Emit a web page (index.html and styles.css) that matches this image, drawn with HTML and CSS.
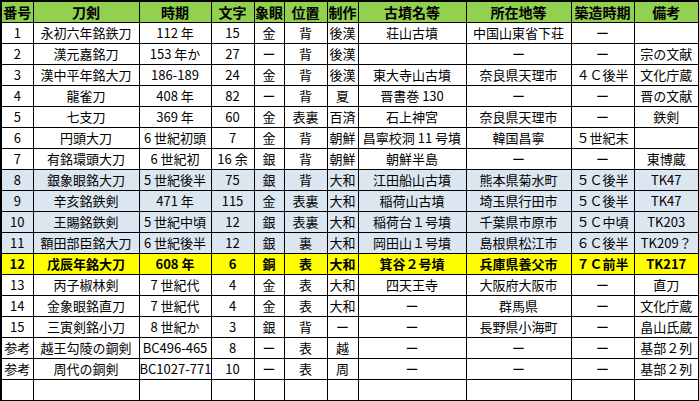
FILE: index.html
```html
<!DOCTYPE html>
<html lang="ja">
<head>
<meta charset="utf-8">
<link rel="stylesheet" href="styles.css">
</head>
<body>
<table class="sheet">
<colgroup>
<col class="c1"><col class="c2"><col class="c3"><col class="c4"><col class="c5"><col class="c6"><col class="c7"><col class="c8"><col class="c9"><col class="c10"><col class="c11">
</colgroup>
<thead>
<tr class="head"><th>番号</th><th>刀剣</th><th>時期</th><th>文字</th><th>象眼</th><th>位置</th><th>制作</th><th>古墳名等</th><th>所在地等</th><th>築造時期</th><th>備考</th></tr>
</thead>
<tbody>
<tr><td>1</td><td>永初六年銘鉄刀</td><td>112 年</td><td>15</td><td>金</td><td>背</td><td>後漢</td><td>荘山古墳</td><td>中国山東省下荘</td><td>ー</td><td></td></tr>
<tr><td>2</td><td>漢元嘉銘刀</td><td>153 年か</td><td>27</td><td>ー</td><td>背</td><td>後漢</td><td></td><td>ー</td><td>ー</td><td>宗の文献</td></tr>
<tr><td>3</td><td>漢中平年銘大刀</td><td>186-189</td><td>24</td><td>金</td><td>背</td><td>後漢</td><td>東大寺山古墳</td><td>奈良県天理市</td><td>４Ｃ後半</td><td>文化庁蔵</td></tr>
<tr><td>4</td><td>龍雀刀</td><td>408 年</td><td>82</td><td>ー</td><td>背</td><td>夏</td><td>晋書巻 130</td><td>ー</td><td>ー</td><td>晋の文献</td></tr>
<tr><td>5</td><td>七支刀</td><td>369 年</td><td>60</td><td>金</td><td>表裏</td><td>百済</td><td>石上神宮</td><td>奈良県天理市</td><td>ー</td><td>鉄剣</td></tr>
<tr><td>6</td><td>円頭大刀</td><td>6 世紀初頭</td><td>7</td><td>金</td><td>背</td><td>朝鮮</td><td>昌寧校洞 11 号墳</td><td>韓国昌寧</td><td>５世紀末</td><td></td></tr>
<tr><td>7</td><td>有銘環頭大刀</td><td>6 世紀初</td><td>16 余</td><td>銀</td><td>背</td><td>朝鮮</td><td>朝鮮半島</td><td>ー</td><td>ー</td><td>東博蔵</td></tr>
<tr class="blue"><td>8</td><td>銀象眼銘大刀</td><td>5 世紀後半</td><td>75</td><td>銀</td><td>背</td><td>大和</td><td>江田船山古墳</td><td>熊本県菊水町</td><td>５Ｃ後半</td><td>TK47</td></tr>
<tr class="blue"><td>9</td><td>辛亥銘鉄剣</td><td>471 年</td><td>115</td><td>金</td><td>表裏</td><td>大和</td><td>稲荷山古墳</td><td>埼玉県行田市</td><td>５Ｃ後半</td><td>TK47</td></tr>
<tr class="blue"><td>10</td><td>王賜銘鉄剣</td><td>5 世紀中頃</td><td>12</td><td>銀</td><td>表裏</td><td>大和</td><td>稲荷台１号墳</td><td>千葉県市原市</td><td>５Ｃ中頃</td><td>TK203</td></tr>
<tr class="blue"><td>11</td><td>額田部臣銘大刀</td><td>6 世紀後半</td><td>12</td><td>銀</td><td>裏</td><td>大和</td><td>岡田山１号墳</td><td>島根県松江市</td><td>６Ｃ後半</td><td>TK209？</td></tr>
<tr class="yellow"><td>12</td><td>戊辰年銘大刀</td><td>608 年</td><td>6</td><td>銅</td><td>表</td><td>大和</td><td>箕谷２号墳</td><td>兵庫県養父市</td><td>７Ｃ前半</td><td>TK217</td></tr>
<tr><td>13</td><td>丙子椒林剣</td><td>7 世紀代</td><td>4</td><td>金</td><td>表</td><td>大和</td><td>四天王寺</td><td>大阪府大阪市</td><td>ー</td><td>直刀</td></tr>
<tr><td>14</td><td>金象眼銘直刀</td><td>7 世紀代</td><td>4</td><td>金</td><td>表</td><td>大和</td><td>ー</td><td>群馬県</td><td>ー</td><td>文化庁蔵</td></tr>
<tr><td>15</td><td>三寅剣銘小刀</td><td>8 世紀か</td><td>3</td><td>銀</td><td>背</td><td>ー</td><td>ー</td><td>長野県小海町</td><td>ー</td><td>畠山氏蔵</td></tr>
<tr><td>参考</td><td>越王勾陵の銅剣</td><td>BC496-465</td><td>8</td><td>ー</td><td>表</td><td>越</td><td>ー</td><td>ー</td><td>ー</td><td>基部２列</td></tr>
<tr><td>参考</td><td>周代の銅剣</td><td>BC1027-771</td><td>10</td><td>ー</td><td>表</td><td>周</td><td>ー</td><td>ー</td><td>ー</td><td>基部２列</td></tr>
<tr><td></td><td></td><td></td><td></td><td></td><td></td><td></td><td></td><td></td><td></td><td></td></tr>
</tbody>
</table>
</body>
</html>
```

FILE: styles.css
```css
html, body {
  margin: 0;
  padding: 0;
  background: #ffffff;
}
body {
  font-family: "Noto Sans CJK JP", "DejaVu Sans", sans-serif;
  font-size: 13px;
  color: #000000;
}
.sheet {
  border-collapse: collapse;
  table-layout: fixed;
  width: 698px;
  border: 2px solid #000000;
}
.c1 { width: 32px; }
.c2 { width: 106px; }
.c3 { width: 72px; }
.c4 { width: 43px; }
.c5 { width: 30px; }
.c6 { width: 43px; }
.c7 { width: 31px; }
.c8 { width: 108px; }
.c9 { width: 105px; }
.c10 { width: 63px; }
.c11 { width: 65px; }
.sheet th,
.sheet td {
  border: 1px solid #000000;
  height: 20px;
  padding: 0;
  text-align: center;
  vertical-align: middle;
  line-height: 18px;
  white-space: nowrap;
  overflow: hidden;
}
.head th {
  background: #92d050;
  font-weight: bold;
  font-size: 14px;
}
.blue td {
  background: #dce6f1;
}
.yellow td {
  background: #ffff00;
  font-weight: bold;
}
```
